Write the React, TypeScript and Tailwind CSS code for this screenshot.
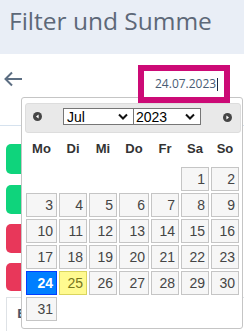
import type { JSX } from "react";

const weekdays: string[] = ["Mo", "Di", "Mi", "Do", "Fr", "Sa", "So"];
const days: number[] = Array.from({ length: 31 }, (_, i) => i + 1);

function CircleIcon({ dir }: { dir: "left" | "right" }): JSX.Element {
	return (
		<svg width="9" height="9" viewBox="0 0 9 9">
			<circle cx="4.5" cy="4.5" r="4.5" fill="#454545" />
			{dir === "left" ? (
				<polygon points="5.6,2.4 3,4.5 5.6,6.6" fill="#ffffff" />
			) : (
				<polygon points="3.4,2.4 6,4.5 3.4,6.6" fill="#ffffff" />
			)}
		</svg>
	);
}

function Chevron(): JSX.Element {
	return (
		<svg width="10" height="7" viewBox="0 0 10 7">
			<path d="M1 1.5 L5 5.5 L9 1.5" fill="none" stroke="#111" strokeWidth="2" />
		</svg>
	);
}

function DayCell({ day }: { day: number }): JSX.Element {
	let tone = "border-[#c5c5c5] bg-[#f6f6f6] text-[#454545]";
	if (day === 24) tone = "border-[#003eff] bg-[#007fff] text-white font-bold";
	if (day === 25) tone = "border-[#dad55e] bg-[#fffa90] text-[#777620]";
	return (
		<div
			className={`flex h-[24px] items-center justify-end border pr-[3px] ${tone} ${day === 1 ? "col-start-6" : ""}`}
		>
			{day}
		</div>
	);
}

export default function App(): JSX.Element {
	return (
		<div className="relative h-[331px] w-[244px] overflow-hidden bg-white font-['Open_Sans',sans-serif]">
			<header className="h-[54px] bg-[#e9eef6] pl-[9px] pt-[5px]">
				<h1 className="text-[24.5px] leading-[32px] text-[#5d6878]">Filter und Summe</h1>
			</header>

			<div className="flex h-[72px] items-start border-b border-[#d6e2ee]">
				<svg className="ml-[4px] mt-[17px]" width="19" height="16" viewBox="0 0 19 16">
					<path
						d="M8 1.5 L1.5 8 L8 14.5 M1.5 8 H18"
						fill="none"
						stroke="#5c6e82"
						strokeWidth="2"
					/>
				</svg>
				<div className="relative z-20 ml-auto mr-[14px] mt-[11px] flex h-[38px] w-[92px] items-center border-[6px] border-[#cc0a76] bg-white pl-[11px]">
					<span className="text-[12px] text-[#495c74]">24.07.2023</span>
					<span className="ml-px h-[13px] w-px bg-[#1a2a44]" />
				</div>
			</div>

			<div className="flex flex-col pl-[6px] pt-[18px]">
				<div className="h-[30px] w-[60px] rounded-[5px] bg-[#0fd47c]" />
				<div className="mt-[11px] h-[29px] w-[60px] rounded-[5px] bg-[#0fd47c]" />
				<div className="mt-[10px] h-[29px] w-[60px] rounded-[5px] bg-[#e8375a]" />
				<div className="mt-[10px] h-[28px] w-[60px] rounded-[5px] bg-[#e8375a]" />
				<div className="mt-[6px] h-[40px] border-l border-t border-[#dee2e6] pl-[10px] pt-[2px]">
					<span className="text-[13px] font-bold text-[#4a5568]">E</span>
				</div>
			</div>

			<div className="absolute left-[21px] top-[97px] z-10 h-[232px] w-[222px] rounded-[3px] border border-[#c5c5c5] bg-white pt-[5px] font-['Liberation_Sans_Narrow','Liberation_Sans',Arial,sans-serif]">
				<div className="relative ml-[3px] h-[30px] w-[216px] rounded-[3px] border border-[#dddddd] bg-[#e9e9e9]">
					<div className="absolute left-[7px] top-[8px]">
						<CircleIcon dir="left" />
					</div>
					<div className="absolute left-[37px] top-[4px] flex">
						<div className="flex h-[17px] w-[71px] items-center justify-between border border-[#767676] bg-white pl-[3px] pr-[5px] text-[14px] leading-none text-black">
							<span>Jul</span>
							<Chevron />
						</div>
						<div className="flex h-[17px] w-[67px] items-center justify-between border border-l-0 border-[#767676] bg-white pl-[2px] pr-[5px] text-[14px] leading-none text-black">
							<span>2023</span>
							<Chevron />
						</div>
					</div>
					<div className="absolute left-[197px] top-[9px]">
						<CircleIcon dir="right" />
					</div>
				</div>

				<div className="ml-[4px] grid h-[31px] grid-cols-[31px_28px_28px_30px_28px_28px_28px] items-center gap-x-[2px] text-[13px] font-bold text-[#333333]">
					{weekdays.map((w: string) => (
						<div className="text-center" key={w}>
							{w}
						</div>
					))}
				</div>

				<div className="ml-[4px] mt-[3px] grid grid-cols-[31px_28px_28px_30px_28px_28px_28px] gap-[2px] text-[14px]">
					{days.map((d: number) => (
						<DayCell day={d} key={d} />
					))}
				</div>
			</div>
		</div>
	);
}
